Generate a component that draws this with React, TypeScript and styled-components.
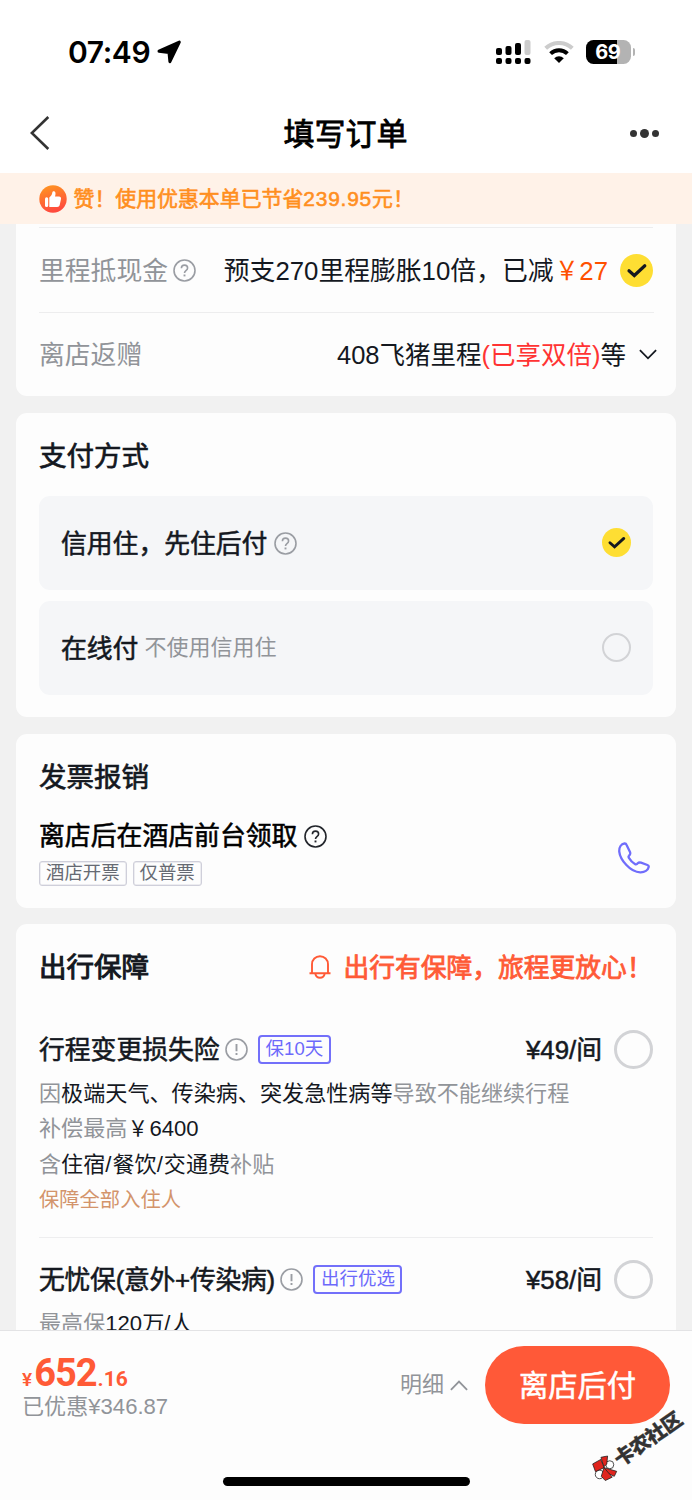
import React from 'react';
import styled, { createGlobalStyle, css } from 'styled-components';

const GlobalStyle = createGlobalStyle`
  * { box-sizing: border-box; }
  body {
    margin: 0;
    background: #fdfdfd;
    font-family: "Liberation Sans", "Noto Sans CJK SC", sans-serif;
    color: #14181f;
  }
  svg { display: block; flex: none; }
`;

const medium = css`
  font-weight: 400;
  -webkit-text-stroke: 0.55px currentColor;
`;

const Screen = styled.div`
  width: 692px;
  height: 1500px;
  display: flex;
  flex-direction: column;
  overflow: hidden;
  position: relative;
`;

const StatusBar = styled.header`
  height: 96px;
  padding: 7px 57px 0 68px;
  display: flex;
  align-items: center;
  justify-content: space-between;
  background: #fff;
  flex: none;
`;

const TimeGroup = styled.div`
  display: flex;
  align-items: center;
  gap: 7px;
`;

const Time = styled.span`
  font: 600 30px/36px Inter, sans-serif;
  color: #000;
  letter-spacing: -0.4px;
`;

const StatusIcons = styled.div`
  display: flex;
  align-items: center;
  gap: 12.5px;
`;

const Battery = styled.div`
  display: flex;
  align-items: center;
  gap: 2px;
`;

const BatteryBody = styled.div`
  width: 44.5px;
  height: 24px;
  border-radius: 7.5px;
  background: linear-gradient(90deg, #000 69%, #b3b3b3 69%);
  color: #fff;
  font: 700 20px/25px Inter, sans-serif;
  text-align: center;
  letter-spacing: -0.4px;
  padding-right: 1px;
`;

const BatteryCap = styled.i`
  width: 2.5px;
  height: 8px;
  border-radius: 0 4px 4px 0;
  background: #b3b3b3;
`;

const NavBar = styled.nav`
  height: 77px;
  padding: 0 33px 3px 30px;
  display: grid;
  grid-template-columns: 60px 1fr 60px;
  align-items: center;
  background: #fff;
  flex: none;
`;

const NavTitle = styled.h1`
  margin: 0;
  padding: 3px 0 0 2px;
  text-align: center;
  font-size: 31px;
  line-height: 40px;
  color: #000;
  font-weight: 400;
  -webkit-text-stroke: 0.8px currentColor;
`;

const More = styled.div`
  display: flex;
  justify-content: flex-end;
  align-items: center;
  gap: 3px;
`;

const Dot = styled.i<{ $size: number }>`
  width: ${(p) => p.$size}px;
  height: ${(p) => p.$size}px;
  border-radius: 50%;
  background: #333;
`;

const Banner = styled.div`
  height: 51px;
  padding-left: 38.5px;
  display: flex;
  align-items: center;
  gap: 7px;
  background: #fff2e8;
  color: #ff8f1f;
  font-size: 20.9px;
  line-height: 28px;
  font-weight: 400;
  -webkit-text-stroke: 0.6px currentColor;
  flex: none;
`;

const BannerText = styled.span`
  padding-top: 1px;
`;

const SavedAmount = styled.span`
  letter-spacing: 0.8px;
`;

const Content = styled.main`
  height: 1106px;
  padding: 0 16.5px 0 16px;
  background: #f1f1f1;
  display: flex;
  flex-direction: column;
  gap: 17px;
  overflow: hidden;
  flex: none;
`;

const Card = styled.section<{ $height: number; $flatTop?: boolean }>`
  height: ${(p) => p.$height}px;
  padding: 0 22.5px 0 23px;
  border-radius: ${(p) => (p.$flatTop ? '0 0 11px 11px' : '11px')};
  background: #fdfdfd;
  flex: none;
`;

const InsuranceCard = styled(Card)`
  margin-top: -1px;
`;

const CardTitle = styled.h2<{ $bold?: boolean }>`
  margin: 0;
  padding-top: 24px;
  font-size: 27.5px;
  line-height: 40px;
  ${medium}
  -webkit-text-stroke-width: ${(p) => (p.$bold ? 1 : 0.7)}px;
`;

const InfoRow = styled.div<{ $height: number }>`
  height: ${(p) => p.$height}px;
  display: flex;
  align-items: center;
  justify-content: space-between;
  border-top: 1px solid #ededee;
  font-size: 25.8px;
  line-height: 36px;
  white-space: nowrap;
`;

const FirstRow = styled(InfoRow)`
  margin-top: 3px;
`;

const GiftRow = styled(InfoRow)`
  margin-right: -4px;
  padding-bottom: 1px;
  border-top: 0;
  border-image: linear-gradient(90deg, #ededee 614px, transparent 614px) 1;
  border-style: solid;
  border-width: 1px 0 0;
`;

const Label = styled.span`
  display: flex;
  align-items: center;
  gap: 5px;
  padding-top: 2px;
  color: #919499;
  svg { margin-top: -2px; }
`;

const Value = styled.span<{ $gap: number; $size?: number }>`
  display: flex;
  align-items: center;
  gap: ${(p) => p.$gap}px;
  font-size: ${(p) => p.$size ?? 25.8}px;
  padding-top: 2px;
  svg { margin-top: -2px; }
`;

const Money = styled.span`
  color: #ff5000;
`;

const Yen = styled.span`
  display: inline-block;
  width: 1em;
  text-align: center;
  transform: scaleX(0.9);
`;

const Hot = styled.span`
  color: #ff3333;
`;

const Option = styled.div`
  height: 94px;
  margin-bottom: 11px;
  padding: 0 22px;
  border-radius: 11px;
  background: #f5f6f8;
  display: flex;
  align-items: center;
  justify-content: space-between;
  > svg, > i { margin-top: -1px; }
`;

const OptionList = styled.div`
  padding-top: 19px;
`;

const OptionLabel = styled.span`
  display: flex;
  align-items: center;
  gap: 7px;
  padding-top: 2px;
  font-size: 25.8px;
  line-height: 36px;
  ${medium}
  svg { margin-top: -2px; }
`;

const Hint = styled.span`
  margin: -2px 0 0 -1px;
  font-size: 22px;
  color: #919499;
  -webkit-text-stroke: 0;
`;

const Ring = styled.i<{ $size: number; $stroke: number }>`
  width: ${(p) => p.$size}px;
  height: ${(p) => p.$size}px;
  border: ${(p) => p.$stroke}px solid #d2d3d6;
  border-radius: 50%;
  flex: none;
`;

const InvoiceRow = styled.div`
  display: flex;
  justify-content: space-between;
  padding: 19px 3px 0 0;
`;

const InvoiceTitle = styled.div`
  display: flex;
  align-items: center;
  gap: 7px;
  font-size: 25.85px;
  line-height: 38px;
  color: #000;
  ${medium}
`;

const InvoiceTags = styled.div`
  display: flex;
  gap: 6px;
  padding-top: 6px;
`;

const GreyTag = styled.span`
  height: 25px;
  padding: 0 6px;
  border: 1px solid #cfcfda;
  border-radius: 3px;
  color: #666a73;
  font-size: 18.4px;
  line-height: 22px;
  box-shadow: inset 0 0 0 0.5px #dcdce4;
`;

const PhoneSlot = styled.span`
  padding-top: 25px;
`;

const CardHead = styled.div`
  display: flex;
  justify-content: space-between;
  padding-right: 5px;
`;

const Slogan = styled.span`
  display: flex;
  align-items: center;
  gap: 12.5px;
  padding-top: 22px;
  color: #ff5a36;
  font-size: 25.75px;
  line-height: 40px;
  margin-right: -4.5px;
  font-weight: 400;
  -webkit-text-stroke: 0.8px currentColor;
`;

const SloganText = styled.span`
  padding-top: 2px;
`;

const PlanList = styled.div`
  padding-top: 40px;
  display: flex;
  flex-direction: column;
  gap: 20px;
`;

const Plan = styled.article`
  height: 210px;
  border-bottom: 1px solid #eeeeef;
  flex: none;
`;

const PlanHead = styled.div`
  display: flex;
  align-items: center;
  justify-content: space-between;
  height: 42px;
`;

const PlanName = styled.span<{ $tight?: boolean }>`
  display: flex;
  align-items: center;
  padding-top: 2px;
  font-size: 25.8px;
  line-height: 36px;
  ${medium}
  letter-spacing: ${(p) => (p.$tight ? -0.25 : 0)}px;
  svg { margin: -2px 10.5px 0 5px; }
`;

const BlueTag = styled.span`
  height: 29px;
  margin-top: -2px;
  padding: 0 5.5px;
  border: 2px solid #7370fa;
  border-radius: 4px;
  color: #6c69fb;
  font-size: 18.5px;
  line-height: 24px;
  letter-spacing: 0;
  -webkit-text-stroke: 0;
`;

const PlanPrice = styled.span`
  display: flex;
  align-items: center;
  gap: 12px;
  font-size: 25.8px;
  line-height: 36px;
  ${medium}
`;

const PriceText = styled.span`
  padding-top: 2px;
`;

const PlanText = styled.p`
  margin: 0;
  font-size: 22.1px;
  line-height: 35.4px;
  color: #919499;
  white-space: nowrap;
  b { font-weight: 400; color: #14181f; }
`;

const Slash = styled.span`
  margin-right: 1px;
`;

const PlanBody = styled.div`
  padding-top: 6px;
`;

const PlanNote = styled.p`
  margin: 0;
  font-size: 20.3px;
  line-height: 36px;
  color: #d3946b;
`;

const Footer = styled.footer`
  height: 170px;
  border-top: 1px solid #e3e3e5;
  background: #fdfdfd;
  display: flex;
  justify-content: space-between;
  padding: 15px 22px 0;
  flex: none;
`;

const Total = styled.div`
  padding-top: 7px;
`;

const Price = styled.div`
  height: 40px;
  font: 700 22px/40px Roboto, sans-serif;
  color: #ff5a36;
  display: flex;
  align-items: baseline;
`;

const PriceSign = styled.span`
  font-size: 19px;
  font-weight: 600;
  margin-right: 2px;
`;

const PriceMain = styled.span`
  font-size: 38px;
  letter-spacing: -1px;
`;

const PriceCents = styled.span`
  font-size: 21px;
  margin-left: 1px;
`;

const Saved = styled.div`
  font-size: 22.1px;
  line-height: 28px;
  color: #919499;
`;

const Actions = styled.div`
  display: flex;
  gap: 17px;
  height: 78px;
  align-items: center;
`;

const Detail = styled.span`
  display: flex;
  align-items: center;
  gap: 6px;
  font-size: 22px;
  line-height: 30px;
  color: #919499;
`;

const PayButton = styled.button`
  width: 185px;
  height: 78px;
  border: 0;
  padding: 2px 0 0;
  border-radius: 39px;
  background: #ff5938;
  color: #fff;
  font-family: inherit;
  font-size: 29.3px;
  line-height: 76px;
  ${medium}
`;

const HomeIndicator = styled.div`
  position: absolute;
  left: 223px;
  top: 1477px;
  width: 247px;
  height: 9px;
  border-radius: 5px;
  background: #000;
`;

const Watermark = styled.div`
  position: absolute;
  left: 585px;
  top: 1432px;
  display: flex;
  align-items: center;
  transform: rotate(-35deg);
  color: #333;
  font-size: 20px;
  line-height: 26px;
  font-weight: 900;
  letter-spacing: -0.7px;
  white-space: nowrap;
  -webkit-text-stroke: 0.3px currentColor;
  svg { transform: rotate(35deg); }
`;

const WatermarkText = styled.span`
  padding-top: 2px;
`;

const HelpIcon = ({ color = '#9a9da3' }: { color?: string }) => (
  <svg width="23" height="23" viewBox="0 0 23 23" fill="none" stroke={color} strokeWidth="1.6">
    <circle cx="11.5" cy="11.5" r="10.5" />
    <path d="M8.4 9.2c0-1.9 1.3-3.1 3.1-3.1s3.1 1.2 3.1 2.9c0 1.3-.8 1.9-1.7 2.6-.9.7-1.4 1.2-1.4 2.5" />
    <path d="M11.5 15.5v1.9" strokeWidth="1.9" />
  </svg>
);

const AlertIcon = () => (
  <svg width="23" height="23" viewBox="0 0 23 23" fill="none" stroke="#9a9da3" strokeWidth="1.6">
    <circle cx="11.5" cy="11.5" r="10.5" />
    <path d="M11.5 6v7.2M11.5 15v2" strokeWidth="1.9" />
  </svg>
);

const CheckIcon = ({ size }: { size: number }) => (
  <svg width={size} height={size} viewBox="0 0 33 33">
    <circle cx="16.5" cy="16.5" r="16.5" fill="#fede33" />
    <path d="M9 16.8l5.3 4.7 10.5-9.7" fill="none" stroke="#14181f" strokeWidth="3.2" strokeLinecap="round" />
  </svg>
);

const LocationIcon = () => (
  <svg width="25" height="24" viewBox="0 0 25 24">
    <path
      d="M2 11.2 22.3 2.1 12.9 21.7 12 12.500z"
      fill="#000"
      stroke="#000"
      strokeWidth="3"
      strokeLinejoin="round"
    />
  </svg>
);

const SignalIcon = () => (
  <svg width="35" height="24" viewBox="0 0 35 24">
    <rect x="0" y="8" width="6" height="7" rx="2" />
    <rect x="9.5" y="6" width="6" height="9" rx="2" />
    <rect x="19" y="3" width="6" height="12" rx="2" />
    <rect x="28.5" y="0" width="6" height="15" rx="2" fill="#ccc" />
    <rect x="0" y="18" width="6" height="6" rx="2" />
    <rect x="9.5" y="18" width="6" height="6" rx="2" />
    <rect x="19" y="18" width="6" height="6" rx="2" />
    <rect x="28.5" y="18" width="6" height="6" rx="2" />
  </svg>
);

const WifiIcon = () => (
  <svg width="30" height="22" viewBox="0 0 30 22" fill="none" strokeWidth="4">
    <path d="M1.7 7.3a19.2 19.2 0 0 1 26.6 0" stroke="#ccc" />
    <path d="M6.6 12.6a12.2 12.2 0 0 1 16.8 0" stroke="#000" />
    <path d="M15 22l-4.8-4.8a7 7 0 0 1 9.6 0z" fill="#000" />
  </svg>
);

const BackIcon = () => (
  <svg width="20" height="34" viewBox="0 0 20 34" fill="none" stroke="#333" strokeWidth="2.6">
    <path d="M18.3 1 1.8 17l16.5 16" />
  </svg>
);

const ThumbIcon = () => (
  <svg width="28" height="28" viewBox="0 0 28 28">
    <defs>
      <linearGradient id="thumb" x1="0" y1="0" x2="0.3" y2="1">
        <stop offset="0" stopColor="#ff9a1f" />
        <stop offset="1" stopColor="#ff4b3e" />
      </linearGradient>
    </defs>
    <circle cx="14" cy="14" r="13.7" fill="url(#thumb)" />
    <rect x="6" y="12.3" width="3.2" height="9.7" rx="1.5" fill="#fff" />
    <path
      d="M10.3 12.5c1.9-1.5 2.7-3 3-5 .3-1.7 3-1.6 3.2.8.1 1.2-.2 2.3-.5 3.3h4c1.5 0 2.3 1 2 2.4l-1.3 5.9c-.3 1.3-1.2 2-2.5 2h-7.9z"
      fill="#fff"
    />
  </svg>
);

const Chevron = ({ up, color }: { up?: boolean; color: string }) => (
  <svg width="18" height="11" viewBox="0 0 18 11" fill="none" stroke={color} strokeWidth="1.8">
    <path d={up ? 'M.9 9.8 9 1.5l8.1 8.3' : 'M.9 1.2 9 9.3l8.1-8.1'} />
  </svg>
);

const BellIcon = () => (
  <svg width="22" height="24" viewBox="0 0 22 24" fill="none" stroke="#ff5a36" strokeWidth="1.9">
    <path d="M3 18.3V9.2a8 8 0 0 1 16 0v9.1M.5 18.3h21M6.2 18.5c.6 2.7 2.3 4.3 4.8 4.3s4.2-1.6 4.8-4.3" />
  </svg>
);

const PhoneIcon = () => (
  <svg width="32" height="32" viewBox="0 0 32 32" fill="none" stroke="#706dfb" strokeWidth="2.3" strokeLinejoin="round">
    <path d="M6.5 1.5C3.2 2 .9 5.2 1.3 9.8c.4 4 3.1 8.9 7.1 13.3 4.2 4.5 9.3 7.4 14.3 7.2 3.9-.1 7.4-2.2 8-5.2.2-1-.3-1.7-1.3-2.1l-6.4-2.3c-1.4-.4-2.5-.2-3.3.6l-.6.6c-.7.6-1.4.6-2.2.1-2.7-1.5-4.5-3.6-6-6.1-.5-.8-.5-1.5.1-2.2l.8-1c.7-.9.6-1.7.2-2.7L8.6 2.900c-.4-1-1.1-1.5-2.1-1.4z" />
  </svg>
);

const KnotIcon = () => (
  <svg width="26" height="26" viewBox="0 0 26 26" stroke="#222" strokeWidth="0.8" strokeLinejoin="round">
    <circle cx="17.8" cy="9.6" r="4" fill="#fff" />
    <circle cx="7.6" cy="19.3" r="4.3" fill="#fff" />
    <path d="M9 2.2 15.6.8 14.8 9l-3 2.700z" fill="#e0241d" />
    <path d="M.7 8.8 8.8 4.3l3.4 8.2-8.7 4z" fill="#e0241d" />
    <path d="M12 12.5 24.7 16.2l-2.4 5-7-3.4z" fill="#e0241d" />
    <path d="M12 12.5 20.3 22l-7 3.4-4-4.200z" fill="#e0241d" />
  </svg>
);

const App = () => (
  <>
    <GlobalStyle />
    <Screen>
      <StatusBar>
        <TimeGroup>
          <Time>07:49</Time>
          <LocationIcon />
        </TimeGroup>
        <StatusIcons>
          <SignalIcon />
          <WifiIcon />
          <Battery>
            <BatteryBody>69</BatteryBody>
            <BatteryCap />
          </Battery>
        </StatusIcons>
      </StatusBar>
      <NavBar>
        <BackIcon />
        <NavTitle>填写订单</NavTitle>
        <More>
          <Dot $size={7} />
          <Dot $size={9} />
          <Dot $size={7} />
        </More>
      </NavBar>
      <Banner>
        <ThumbIcon />
        <BannerText>
          赞！使用优惠本单已节省<SavedAmount>239.95</SavedAmount>元！
        </BannerText>
      </Banner>

      <Content>
        <Card $height={172} $flatTop>
          <FirstRow $height={85}>
            <Label>
              里程抵现金
              <HelpIcon />
            </Label>
            <Value $gap={12}>
              <span>
                预支270里程膨胀10倍，已减
                <Money>
                  <Yen>￥</Yen>27
                </Money>
              </span>
              <CheckIcon size={33} />
            </Value>
          </FirstRow>
          <GiftRow $height={84}>
            <Label>离店返赠</Label>
            <Value $gap={13} $size={25.5}>
              <span>
                408飞猪里程<Hot>(已享双倍)</Hot>等
              </span>
              <Chevron color="#14181f" />
            </Value>
          </GiftRow>
        </Card>

        <Card $height={304}>
          <CardTitle>支付方式</CardTitle>
          <OptionList>
            <Option>
              <OptionLabel>
                信用住，先住后付
                <HelpIcon />
              </OptionLabel>
              <CheckIcon size={29} />
            </Option>
            <Option>
              <OptionLabel>
                在线付<Hint>不使用信用住</Hint>
              </OptionLabel>
              <Ring $size={29} $stroke={2} />
            </Option>
          </OptionList>
        </Card>

        <Card $height={174}>
          <CardTitle>发票报销</CardTitle>
          <InvoiceRow>
            <div>
              <InvoiceTitle>
                离店后在酒店前台领取
                <HelpIcon color="#22252b" />
              </InvoiceTitle>
              <InvoiceTags>
                <GreyTag>酒店开票</GreyTag>
                <GreyTag>仅普票</GreyTag>
              </InvoiceTags>
            </div>
            <PhoneSlot>
              <PhoneIcon />
            </PhoneSlot>
          </InvoiceRow>
        </Card>

        <InsuranceCard $height={460}>
          <CardHead>
            <CardTitle $bold>出行保障</CardTitle>
            <Slogan>
              <BellIcon />
              <SloganText>出行有保障，旅程更放心！</SloganText>
            </Slogan>
          </CardHead>
          <PlanList>
            <Plan>
              <PlanHead>
                <PlanName>
                  行程变更损失险
                  <AlertIcon />
                  <BlueTag>保10天</BlueTag>
                </PlanName>
                <PlanPrice>
                  <PriceText>¥49/间</PriceText>
                  <Ring $size={39} $stroke={3} />
                </PlanPrice>
              </PlanHead>
              <PlanBody>
                <PlanText>
                  因<b>极端天气、传染病、突发急性病等</b>导致不能继续行程
                </PlanText>
                <PlanText>
                  补偿最高
                  <b>
                    <Yen>￥</Yen>6400
                  </b>
                </PlanText>
                <PlanText>
                  含
                  <b>
                    住宿<Slash>/</Slash>餐饮<Slash>/</Slash>交通费
                  </b>
                  补贴
                </PlanText>
                <PlanNote>保障全部入住人</PlanNote>
              </PlanBody>
            </Plan>
            <Plan>
              <PlanHead>
                <PlanName $tight>
                  无忧保(意外+传染病)
                  <AlertIcon />
                  <BlueTag>出行优选</BlueTag>
                </PlanName>
                <PlanPrice>
                  <PriceText>¥58/间</PriceText>
                  <Ring $size={39} $stroke={3} />
                </PlanPrice>
              </PlanHead>
              <PlanBody>
                <PlanText>
                  最高保<b>120万/人</b>
                </PlanText>
              </PlanBody>
            </Plan>
          </PlanList>
        </InsuranceCard>
      </Content>

      <Footer>
        <Total>
          <Price>
            <PriceSign>¥</PriceSign>
            <PriceMain>652</PriceMain>
            <PriceCents>.16</PriceCents>
          </Price>
          <Saved>已优惠¥346.87</Saved>
        </Total>
        <Actions>
          <Detail>
            明细
            <Chevron up color="#919499" />
          </Detail>
          <PayButton>离店后付</PayButton>
        </Actions>
      </Footer>
      <HomeIndicator />
      <Watermark>
        <KnotIcon />
        <WatermarkText>卡农社区</WatermarkText>
      </Watermark>
    </Screen>
  </>
);

export default App;
